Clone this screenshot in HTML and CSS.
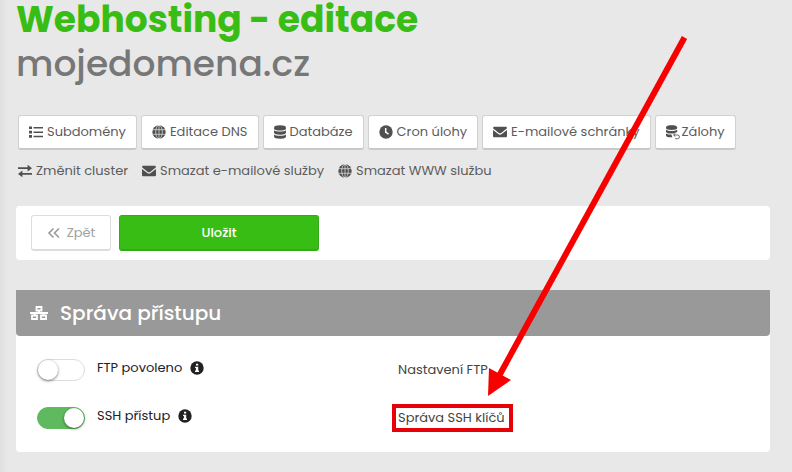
FILE: index.html
```html
<!DOCTYPE html>
<html lang="cs">
<head>
    <meta charset="UTF-8">
    <meta name="viewport" content="width=device-width, initial-scale=1.0">
    <title>Webhosting - editace</title>
    <link rel="stylesheet" href="styles.css">
</head>
<body>

    <!-- shared icons -->
    <svg class="sprite" aria-hidden="true">
        <symbol id="i-list" viewBox="0 0 14 14">
            <path d="M0 1.500h3v2.600H0zM0 5.800h3v2.600H0zM0 10.100h3v2.600H0zM4.500 2.100H14v1.500H4.500zM4.500 6.400H14v1.500H4.500zM4.500 10.700H14v1.500H4.500z"/>
        </symbol>
        <symbol id="i-globe" viewBox="0 0 14 14">
            <circle cx="7" cy="7" r="6.700"/>
            <path d="M7 0v14M.8 4.700h12.400M.8 9.300h12.400" fill="none" stroke="#fff" stroke-width=".6"/>
            <ellipse cx="7" cy="7" rx="3.300" ry="6.700" fill="none" stroke="#fff" stroke-width=".6"/>
        </symbol>
        <symbol id="i-db" viewBox="1 0 12 14">
            <path d="M1 2.500C1 1 3.600.3 7 .3s6 .7 6 2.200v1C13 5 10.400 5.600 7 5.600S1 5 1 3.500z"/>
            <path d="M1 5.300c1.200 1 3.600 1.300 6 1.300s4.800-.3 6-1.300v2.200c0 1.500-2.600 2.200-6 2.200s-6-.7-6-2.200z"/>
            <path d="M1 9.400c1.200 1 3.600 1.300 6 1.300s4.800-.3 6-1.300v2.100c0 1.500-2.600 2.200-6 2.200s-6-.7-6-2.200z"/>
        </symbol>
        <symbol id="i-clock" viewBox="0 0 14 14">
            <circle cx="7" cy="7" r="6.700"/>
            <path d="M6.700 3v4.200l2.800 2" fill="none" stroke="#fff" stroke-width="1.500"/>
        </symbol>
        <symbol id="i-mail" viewBox="0 0 14 14">
            <path d="M0 3.300C0 2.300.6 1.800 1.400 1.800h11.200c.8 0 1.400.5 1.400 1.500L8.200 7.900c-.8.6-1.600.6-2.400 0z"/>
            <path d="M0 4.900l5.300 4.200c1.100.8 2.300.8 3.400 0L14 4.900v6c0 .8-.6 1.300-1.400 1.300H1.400C.6 12.200 0 11.700 0 10.900z"/>
        </symbol>
        <symbol id="i-swap" viewBox="0 0 14 14">
            <path d="M0 3.300h9.600V.7L14 4.200 9.600 7.600V5.100H0zM14 9H4.400V6.500L0 9.900l4.400 3.400v-2.500H14z"/>
        </symbol>
        <symbol id="i-backup" viewBox="1 0 15 16">
            <path d="M1 3C1 1.500 3.600.8 7 .8s6 .7 6 2.200v.7c0 1.500-2.600 2.100-6 2.100s-6-.6-6-2.100z"/>
            <path d="M1 5.600c1.200 1 3.600 1.300 6 1.300s4.800-.3 6-1.300v2.300L9.200 9.600 7 9.700c-3.400 0-6-.7-6-2z"/>
            <path d="M1 9.500c1.600 1 3.800 1.200 5.800 1.200L7.800 13.700c-3.800.2-6.800-.5-6.800-2z"/>
            <path d="M9.500 11.200h4a2 2 0 0 1-.2 4h-2.500M11 9.500l-2 1.700 2 1.600" fill="none" stroke="currentColor" stroke-width=".9"/>
        </symbol>
        <symbol id="i-back" viewBox="0 0 14 14">
            <path d="M6.500 2.500L2 7l4.500 4.500M12 2.500L7.500 7l4.500 4.500" fill="none" stroke="currentColor" stroke-width="1.600"/>
        </symbol>
        <symbol id="i-network" viewBox="0 0 18 16">
            <path d="M6.500 2h5v3.500h-5zM2 10.500h5V14H2zM11 10.500h5V14h-5zM9 6v2M0 8h18M4.500 8v2M13.500 8v2" fill="none" stroke="currentColor" stroke-width="1.800"/>
        </symbol>
        <symbol id="i-info" viewBox="0 0 14 14">
            <circle cx="7" cy="7" r="6.700"/>
            <path d="M6 2.700h2.200v1.900H6zM5.100 5.700h3.100v3.800h.8v1.400H5V9.500h.9V7.100h-.8z" fill="#fff"/>
        </symbol>
    </svg>

    <main class="page">
        <h1 class="title">Webhosting - editace</h1>
        <p class="domain">mojedomena.cz</p>

        <div class="tools">
            <button type="button" class="btn"><svg class="icon"><use href="#i-list"/></svg>Subdomény</button>
            <button type="button" class="btn"><svg class="icon"><use href="#i-globe"/></svg>Editace DNS</button>
            <button type="button" class="btn"><svg class="icon icon-narrow"><use href="#i-db"/></svg>Databáze</button>
            <button type="button" class="btn"><svg class="icon"><use href="#i-clock"/></svg>Cron úlohy</button>
            <button type="button" class="btn"><svg class="icon"><use href="#i-mail"/></svg>E-mailové schránky</button>
            <button type="button" class="btn btn-backup"><svg class="icon"><use href="#i-backup"/></svg>Zálohy</button>
        </div>

        <nav class="links">
            <a href="#"><svg class="icon"><use href="#i-swap"/></svg>Změnit cluster</a>
            <a href="#"><svg class="icon"><use href="#i-mail"/></svg>Smazat e-mailové služby</a>
            <a href="#"><svg class="icon"><use href="#i-globe"/></svg>Smazat WWW službu</a>
        </nav>

        <div class="actions">
            <button type="button" class="btn btn-back"><svg class="icon"><use href="#i-back"/></svg>Zpět</button>
            <button type="submit" class="btn btn-save">Uložit</button>
        </div>

        <section class="card">
            <h2 class="card-header"><svg class="icon"><use href="#i-network"/></svg>Správa přístupu</h2>
            <div class="card-body">
                <div class="row">
                    <input type="checkbox" class="switch" id="ftp">
                    <div class="label"><label for="ftp">FTP povoleno</label><svg class="icon"><use href="#i-info"/></svg></div>
                    <a href="#">Nastavení FTP</a>
                </div>
                <div class="row">
                    <input type="checkbox" class="switch" id="ssh" checked>
                    <div class="label"><label for="ssh">SSH přístup</label><svg class="icon"><use href="#i-info"/></svg></div>
                    <a href="#" class="marked">Správa SSH klíčů</a>
                </div>
            </div>
        </section>
    </main>

    <!-- arrow pointing at the SSH keys link -->
    <svg class="arrow" width="792" height="472" viewBox="0 0 792 472" aria-hidden="true">
        <path d="M684.500 37.500L499 376" stroke="#f80000" stroke-width="6"/>
        <path d="M488 396l1-28 22 12z" fill="#f80000"/>
    </svg>

</body>
</html>
```
FILE: styles.css
```css
* {
    box-sizing: border-box;
}

body {
    margin: 0;
    min-height: 100vh;
    position: relative;
    overflow-x: hidden;
    background: linear-gradient(to right, #dfdfdf, #e8e8e8 8px);
    font-family: Poppins, Inter, sans-serif;
    font-size: 13px;
    color: #5c5c5c;
}

a {
    color: inherit;
    text-decoration: none;
}

.sprite {
    display: none;
}

.icon {
    width: 14px;
    height: 14px;
    flex: none;
    fill: currentColor;
}

.page {
    padding: 0 22px 20px 16px;
}

.title {
    margin: 0;
    font-size: 36px;
    line-height: 40px;
    font-weight: 700;
    color: #38bd14;
}

.domain {
    margin: 0 0 27px;
    font-size: 36px;
    line-height: 48px;
    font-weight: 500;
    color: #777;
}

.tools {
    display: flex;
    flex-wrap: wrap;
    gap: 4px;
    margin: 0 2px;
}

.btn {
    display: flex;
    align-items: center;
    justify-content: center;
    gap: 4px;
    height: 35px;
    padding: 0 10px;
    border: 1px solid #d2d2d2;
    border-bottom: 2px solid #c8c8c8;
    border-radius: 3px;
    background: #fff;
    color: #5c5c5c;
    font-family: inherit;
    font-size: 13px;
    white-space: nowrap;
    cursor: pointer;
}

.btn .icon,
.links .icon {
    color: #505050;
}

.btn .icon-narrow {
    width: 12px;
}

.btn-backup {
    gap: 2px;
}

.btn-backup .icon {
    height: 16px;
}

.links {
    display: flex;
    flex-wrap: wrap;
    gap: 14px;
    margin: 11px 2px 25px;
    line-height: 20px;
}

.links a {
    display: flex;
    align-items: center;
    gap: 4px;
}

.actions {
    display: flex;
    gap: 8px;
    padding: 9px 15px;
    border-radius: 4px;
    background: #fff;
}

.btn-back {
    width: 80px;
    height: 36px;
    gap: 6px;
    border-color: #ddd;
    color: #a0a0a0;
}

.btn-back .icon {
    color: #999;
}

.btn-save {
    width: 200px;
    height: 36px;
    border-color: #34a91a;
    background: #38bd14;
    color: #fff;
    font-weight: 500;
}

.card {
    margin-top: 30px;
    border-radius: 0 0 4px 4px;
    background: #fff;
}

.card-header {
    display: flex;
    align-items: center;
    gap: 12px;
    margin: 0;
    padding: 0 14px;
    border-radius: 0 0 4px 4px;
    background: #999;
    color: #fff;
    font-size: 20px;
    line-height: 46px;
    font-weight: 500;
}

.card-header .icon {
    width: 18px;
    height: 16px;
}

.card-body {
    padding: 10px 21px;
}

.row {
    display: grid;
    grid-template-columns: 48px 289px 1fr;
    column-gap: 12px;
    align-items: center;
    justify-items: start;
    height: 48px;
    color: #444;
}

.label {
    display: flex;
    align-items: center;
    gap: 8px;
    padding-bottom: 4px;
    color: #222;
}

.switch {
    appearance: none;
    width: 48px;
    height: 22px;
    margin: 0;
    border: 1px solid #ddd;
    border-radius: 11px;
    background: #fff;
    cursor: pointer;
}

.switch::before {
    content: "";
    display: block;
    width: 20px;
    height: 20px;
    border-radius: 50%;
    background: #fff;
    box-shadow: 0 1px 3px rgba(0, 0, 0, 0.5);
}

.switch:checked {
    border-color: #5fba5f;
    background: #5fba5f;
}

.switch:checked::before {
    margin-left: auto;
}

.marked {
    margin-left: -2px;
    padding: 0 4px 0 2px;
    line-height: 20px;
    outline: 4px solid #e60008;
}

.arrow {
    position: absolute;
    top: 0;
    left: 0;
    pointer-events: none;
}
```
